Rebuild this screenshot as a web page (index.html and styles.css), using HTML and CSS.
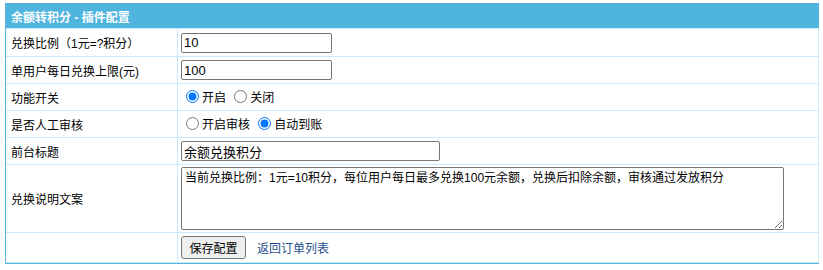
FILE: index.html
```html
<!DOCTYPE html>
<html lang="zh-CN">
<head>
<meta charset="utf-8">
<title>余额转积分 - 插件配置</title>
<link rel="stylesheet" href="styles.css">
</head>
<body>
<table class="cfg">
  <tr class="r-head"><th colspan="2" class="head">余额转积分 - 插件配置</th></tr>
  <tr class="r-28">
    <td class="label">兑换比例（1元=?积分）</td>
    <td class="value"><input class="txt short" type="text" value="10"></td>
  </tr>
  <tr class="r-27">
    <td class="label">单用户每日兑换上限(元)</td>
    <td class="value"><input class="txt short" type="text" value="100"></td>
  </tr>
  <tr class="r-27">
    <td class="label">功能开关</td>
    <td class="value">
      <label class="opt"><input type="radio" name="on" checked>开启</label>
      <label class="opt"><input type="radio" name="on">关闭</label>
    </td>
  </tr>
  <tr class="r-27">
    <td class="label">是否人工审核</td>
    <td class="value">
      <label class="opt"><input type="radio" name="audit">开启审核</label>
      <label class="opt"><input type="radio" name="audit" checked>自动到账</label>
    </td>
  </tr>
  <tr class="r-27">
    <td class="label">前台标题</td>
    <td class="value"><input class="txt mid" type="text" value="余额兑换积分"></td>
  </tr>
  <tr class="r-68">
    <td class="label">兑换说明文案</td>
    <td class="value"><textarea class="area">当前兑换比例：1元=10积分，每位用户每日最多兑换100元余额，兑换后扣除余额，审核通过发放积分</textarea></td>
  </tr>
  <tr class="r-30">
    <td class="label"></td>
    <td class="value"><button class="btn" type="button">保存配置</button><a class="back" href="#">返回订单列表</a></td>
  </tr>
</table>
</body>
</html>
```
FILE: styles.css
```css
html, body {
  background: #ffffff;
}
body {
  margin: 3px 4px 0 5px;
  font-family: "Liberation Sans", "Noto Sans CJK SC", sans-serif;
  font-size: 12px;
  color: #000000;
}
.cfg {
  width: 815px;
  border: 1px solid #55b3dc;
  border-collapse: separate;
  border-spacing: 0;
}
.cfg th, .cfg td {
  box-sizing: border-box;
  padding: 0;
  vertical-align: middle;
  text-align: left;
}
.cfg .head {
  height: 25px;
  background: #4fb4de;
  color: #ffffff;
  font-weight: bold;
  padding-left: 5px;
  border-bottom: 1px solid #c6ecfa;
}
.cfg .label {
  width: 172px;
  padding-left: 5px;
  border-right: 1px solid #c6ecfa;
  border-bottom: 1px solid #c6ecfa;
  white-space: nowrap;
}
.cfg .value {
  padding-left: 3px;
  border-right: 1px solid #c6ecfa;
  border-bottom: 1px solid #c6ecfa;
}
.r-28 td { height: 28px; }
.r-27 td { height: 27px; }
.r-68 td { height: 68px; }
.r-30 td { height: 30px; }
.txt {
  box-sizing: border-box;
  height: 20px;
  margin: 0;
  padding: 1px 2px;
  border: 1px solid #767676;
  border-radius: 2px;
  font-family: "Liberation Sans", "Noto Sans CJK SC", sans-serif;
  font-size: 13px;
  display: block;
}
.short { width: 151px; }
.mid { width: 259px; }
.opt {
  display: inline-flex;
  align-items: center;
  margin-right: 0;
}
.opt input {
  margin: 0 3px 0 5px;
  width: 13px;
  height: 13px;
}
.area {
  box-sizing: border-box;
  display: block;
  width: 603px;
  height: 63px;
  margin: 0;
  padding: 2px 3px;
  border: 1px solid #767676;
  border-radius: 2px;
  font-family: "Liberation Sans", "Noto Sans CJK SC", sans-serif;
  font-size: 12px;
  line-height: 16px;
}
.btn {
  box-sizing: border-box;
  height: 23px;
  width: 65px;
  margin: 0;
  padding: 0;
  border: 1px solid #767676;
  border-radius: 3px;
  background: #efefef;
  font-family: "Liberation Sans", "Noto Sans CJK SC", sans-serif;
  font-size: 12px;
  color: #000000;
  vertical-align: middle;
}
.back {
  margin-left: 11px;
  color: #1f4e8c;
  text-decoration: none;
  vertical-align: middle;
}
```
